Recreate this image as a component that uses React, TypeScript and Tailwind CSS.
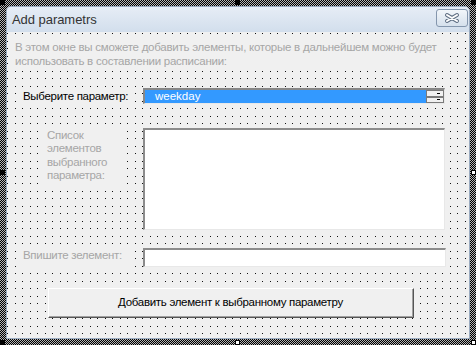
import React from "react";

const dots =
  "bg-[#f0f0f0] bg-[conic-gradient(at_1px_1px,transparent_75%,#111_0),conic-gradient(at_1px_1px,transparent_75%,#111_0),conic-gradient(at_1px_1px,transparent_75%,#111_0),conic-gradient(at_1px_1px,transparent_75%,#111_0)] bg-[size:15px_15px] bg-[position:0_1px,8px_1px,0_9px,8px_9px]";

function Handle({ pos, white }: { pos: string; white?: boolean }) {
  return (
    <div
      className={`absolute w-[5px] h-[5px] ${pos} ${
        white ? "bg-white border border-black" : "bg-black"
      }`}
    />
  );
}

export default function App() {
  return (
    <div className="relative w-[476px] h-[345px] overflow-hidden pl-[6px] pt-[6px] font-['Liberation_Sans',Arial,sans-serif] bg-[repeating-conic-gradient(#000_0_25%,#b4b4b4_0_50%)] bg-[size:2px_2px]">
      {/* window */}
      <div className="w-[464px] h-[333px] flex flex-col border border-[#9aabc0] rounded-t-[5px] bg-[#f0f0f0]">
        {/* title bar */}
        <div className="h-[25px] flex items-start justify-between bg-[linear-gradient(#e6edf6,#d2deec)] rounded-t-[4px]">
          <div className="pl-[5px] pt-[5px] text-[13px] leading-[15px] text-[#333] tracking-[-0.05px]">
            Add parametrs
          </div>
          <div className="mt-[2px] mr-[1px] w-[32px] h-[18px] rounded-[3px] border border-[#8496ad] bg-[linear-gradient(#f2f6fa,#d5e0ec)] flex items-center justify-center">
            <svg width="16" height="10" viewBox="0 0 16 10">
              <path
                d="M3 2 L13 8 M13 2 L3 8"
                stroke="#5d6d82"
                strokeWidth="3.8"
                strokeLinecap="round"
              />
              <path
                d="M3 2 L13 8 M13 2 L3 8"
                stroke="#ffffff"
                strokeWidth="2"
                strokeLinecap="round"
              />
            </svg>
          </div>
        </div>
        {/* client area */}
        <div className={`flex-1 flex flex-col ${dots}`}>
          {/* description */}
          <div className="mt-[6px] ml-[5px] w-[432px] h-[30px] bg-[#f0f0f0] pl-[3px] pt-[2px] text-[11.5px] leading-[14px] text-[#a6a6a6] whitespace-nowrap tracking-[-0.25px]">
            В этом окне вы сможете добавить элементы, которые в дальнейшем можно будет
            <br />
            использовать в составлении расписании:
          </div>
          {/* combo row */}
          <div className="mt-[20px] h-[16px] flex items-center">
            <div className="ml-[13px] w-[108px] h-[16px] bg-[#f0f0f0] pl-[3px] text-[11.5px] leading-[16px] text-black whitespace-nowrap tracking-[-0.3px]">
              Выберите параметр:
            </div>
            <div className="ml-[15px] w-[302px] h-[16px] flex border-t-2 border-l-2 border-[#888888] border-b border-r border-b-[#e8e8e8] border-r-[#e8e8e8] bg-[#3399ff]">
              <div className="flex-1 pl-[10px] text-[11.5px] leading-[13px] text-white">
                weekday
              </div>
              <div className="w-[18px] flex flex-col">
                <div className="h-[7px] bg-[#f0f0f0] border border-[#7a7a7a] flex items-center justify-end pr-[3px]">
                  <div className="w-[3px] h-[1px] bg-black" />
                </div>
                <div className="h-[7px] bg-[#f0f0f0] border border-[#7a7a7a] flex items-center justify-end pr-[3px]">
                  <div className="w-[3px] h-[1px] bg-black" />
                </div>
              </div>
            </div>
          </div>
          {/* list row */}
          <div className="mt-[24px] h-[102px] flex items-start">
            <div className="ml-[37px] w-[78px] h-[56px] bg-[#f0f0f0] pl-[3px] pt-[1px] text-[11.5px] leading-[13.3px] text-[#a6a6a6] tracking-[-0.3px]">
              Список
              <br />
              элементов
              <br />
              выбранного
              <br />
              параметра:
            </div>
            <div className="ml-[21px] w-[302px] h-[102px] bg-white border-t-2 border-l-2 border-[#8c8c8c] border-b border-r border-b-[#e8e8e8] border-r-[#e8e8e8]" />
          </div>
          {/* text row */}
          <div className="mt-[18px] h-[19px] flex items-start">
            <div className="ml-[13px] w-[108px] h-[19px] bg-[#f0f0f0] pl-[3px] text-[11.5px] leading-[14px] text-[#a6a6a6] whitespace-nowrap tracking-[-0.3px]">
              Впишите зелемент:
            </div>
            <div className="ml-[15px] w-[303px] h-[19px] bg-white border-t-2 border-l-2 border-[#8c8c8c] border-b border-r border-b-[#e8e8e8] border-r-[#e8e8e8]" />
          </div>
          {/* button */}
          <div className="mt-[21px] ml-[41px] w-[366px] h-[30px] border-t border-l border-white border-b border-r border-b-[#555] border-r-[#555] bg-[#f0f0f0]">
            <div className="w-full h-full border-b border-r border-[#a0a0a0] flex items-center justify-center text-[11.5px] text-black whitespace-nowrap tracking-[-0.3px]">
              Добавить элемент к выбранному параметру
            </div>
          </div>
        </div>
      </div>
      {/* selection handles */}
      <Handle pos="left-0 top-0" />
      <Handle pos="left-[235px] top-0" />
      <Handle pos="left-[471px] top-0" />
      <Handle pos="left-0 top-[170px]" />
      <Handle pos="left-[471px] top-[170px]" white />
      <Handle pos="left-0 top-[340px]" />
      <Handle pos="left-[235px] top-[340px]" white />
      <Handle pos="left-[471px] top-[340px]" white />
    </div>
  );
}
